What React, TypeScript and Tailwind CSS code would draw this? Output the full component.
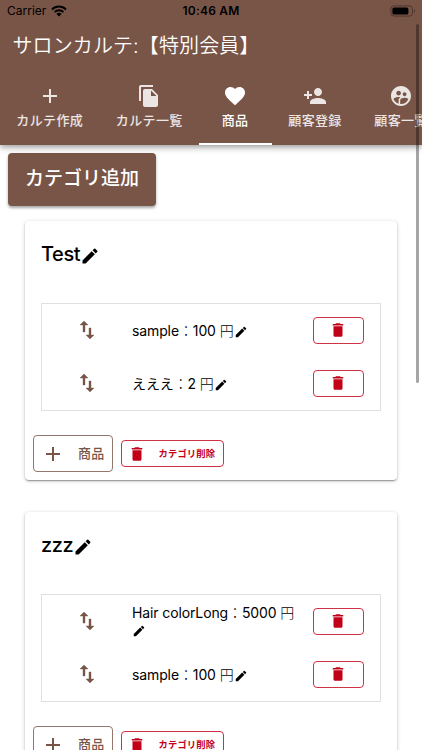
import React from "react";
import {
  MdAdd,
  MdDelete,
  MdEdit,
  MdFavorite,
  MdFileCopy,
  MdPersonAdd,
  MdSupervisedUserCircle,
} from "react-icons/md";

const tabs = [
  { label: "カルテ作成", icon: MdAdd, width: "w-[99.5px]" },
  { label: "カルテ一覧", icon: MdFileCopy, width: "w-[99.5px]" },
  { label: "商品", icon: MdFavorite, width: "w-[73px]", active: true },
  { label: "顧客登録", icon: MdPersonAdd, width: "w-[86px]" },
  { label: "顧客一覧", icon: MdSupervisedUserCircle, width: "w-[86px]" },
];

const categories = [
  {
    name: "Test",
    items: [
      { name: "sample", price: 100 },
      { name: "えええ", price: 2 },
    ],
  },
  {
    name: "zzz",
    items: [
      { name: "Hair colorLong", price: 5000 },
      { name: "sample", price: 100 },
    ],
  },
];

const SortIcon: React.FC = () => (
  <svg width="24" height="24" viewBox="0 0 24 24" fill="#795548" stroke="#795548" strokeWidth="0.4">
    <path d="M9 3 5 6.99h3V14h2V6.99h3L9 3z" />
    <path d="M16 17.01V10h-2v7.01h-3L15 21l4-3.99h-3z" />
  </svg>
);

const StatusBar: React.FC = () => (
  <div className="flex h-[22px] items-center justify-between pl-[7px] pr-[6px] text-black">
    <div className="flex w-[120px] items-center gap-[5px] text-[12px]">
      Carrier
      <svg width="16" height="12" viewBox="0 0 16 12" fill="none" stroke="currentColor">
        <path d="M1 4.4a10 10 0 0 1 14 0" strokeWidth="2.1" />
        <path d="M3.6 7.1a6.2 6.2 0 0 1 8.8 0" strokeWidth="2" />
        <path d="M8 11.6 5.5 9.1a3.5 3.5 0 0 1 5 0z" fill="currentColor" stroke="none" />
      </svg>
    </div>
    <div className="pr-px text-[12px] font-semibold tracking-[0.2px]">10:46 AM</div>
    <div className="flex w-[120px] justify-end">
      <svg width="26" height="12" viewBox="0 0 26 12">
        <rect x="0.9" y="0.9" width="21.6" height="10.2" rx="3" fill="none" stroke="#4f362d" />
        <rect x="2.4" y="2.4" width="16" height="7.2" rx="1.5" fill="#000" />
        <path d="M24 4.2v3.6c1.4-.5 1.4-3.1 0-3.6z" fill="#4f362d" />
      </svg>
    </div>
  </div>
);

const Header: React.FC = () => (
  <header className="relative h-[145px] bg-[#795548] shadow-[0_2px_4px_-1px_rgba(0,0,0,0.2),0_4px_5px_rgba(0,0,0,0.14),0_1px_10px_rgba(0,0,0,0.12)]">
    <StatusBar />
    <h1 className="h-[50px] whitespace-nowrap pl-[12.5px] text-[20px] font-[350] leading-[48px] tracking-[0.1px] text-white">
      サロンカルテ:【特別会員】
    </h1>
    <nav className="flex h-[73px] overflow-hidden">
      {tabs.map(({ label, icon: Icon, width, active }) => (
        <div
          key={label}
          className={`flex shrink-0 flex-col items-center pt-3 ${width} ${
            active ? "border-b-2 border-white pr-px text-white" : "text-white/85"
          }`}
        >
          <Icon size={24} />
          <span className="mt-[2px] whitespace-nowrap text-[13px] font-medium leading-[20px] tracking-[0.35px]">
            {label}
          </span>
        </div>
      ))}
    </nav>
  </header>
);

const Category: React.FC<{ category: (typeof categories)[number] }> = ({ category }) => (
  <section className="h-[259px] rounded bg-white px-2 shadow-[0_2px_1px_-1px_rgba(0,0,0,0.2),0_1px_2px_rgba(0,0,0,0.2),0_1px_4px_rgba(0,0,0,0.16)]">
    <h2 className="flex h-[82px] items-center px-2 pb-4 text-[20px] font-medium tracking-[-0.4px] text-black">
      {category.name}
      <MdEdit size={20} className="mt-[3px]" />
    </h2>

    {/* Item list */}
    <div className="mx-2 h-[108px] border border-[#e0e0e0]">
      {category.items.map((item) => (
        <div key={item.name} className="flex h-[53px] items-center">
          <div className="flex w-[90px] justify-center pb-[2px]">
            <SortIcon />
          </div>
          <div className="w-[181px] pb-px pr-[13px] text-[14px] leading-[17px] tracking-[-0.12px] text-black">
            <span>
              {item.name}
              <span className="font-light">：</span>
              {item.price} <span className="font-light">円</span>
            </span>
            <MdEdit size={14} className="inline-block align-[-3px]" />
          </div>
          <button className="flex h-[27px] w-[51px] items-center justify-center rounded border border-[#c20017]/80 pb-px pr-px text-[#c20017]">
            <MdDelete size={18} />
          </button>
        </div>
      ))}
    </div>

    {/* Actions */}
    <div className="mt-6 flex items-center gap-2">
      <button className="flex h-[37px] w-20 items-center rounded border border-[#795548]/80 pl-[7px] text-[#795548]">
        <MdAdd size={24} />
        <span className="ml-[13px] text-[13px] font-medium tracking-[0.35px]">商品</span>
      </button>
      <button className="flex h-[27px] w-[103px] items-center rounded border border-[#c20017]/80 pl-[6px] text-[#c20017]">
        <MdDelete size={18} />
        <span className="ml-[12.5px] whitespace-nowrap text-[9.3px] font-bold tracking-[0.15px]">
          カテゴリ削除
        </span>
      </button>
    </div>
  </section>
);

const App: React.FC = () => (
  <div className="relative h-[750px] w-[422px] overflow-hidden bg-white font-[Inter,'Noto_Sans_CJK_JP',sans-serif]">
    <Header />
    <main className="pt-2">
      <button className="ml-2 h-[53px] w-[148px] rounded bg-[#795548] text-[19px] font-medium text-white shadow-[0_2px_3px_rgba(0,0,0,0.35)]">
        カテゴリ追加
      </button>
      <div className="mt-[15px] flex flex-col gap-8 px-[25px]">
        {categories.map((category) => (
          <Category key={category.name} category={category} />
        ))}
      </div>
    </main>

    {/* Scroll indicator */}
    <div className="absolute right-[3px] top-6 h-[359px] w-[3px] rounded-full bg-black/35" />
  </div>
);

export default App;
